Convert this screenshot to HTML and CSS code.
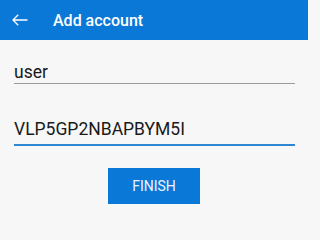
FILE: index.html
```html
<!DOCTYPE html>
<html>
<head>
<meta charset="utf-8">
<link rel="stylesheet" href="styles.css">
</head>
<body>
<header class="appbar">
  <svg class="back" width="16" height="12" viewBox="0 0 16 12" aria-hidden="true">
    <path d="M15.5 6H1M6.2 0.8L1 6l5.2 5.2" fill="none" stroke="#ffffff" stroke-width="1.3"/>
  </svg>
  <span class="title">Add account</span>
</header>
<main class="content">
  <div class="field">user</div>
  <div class="field active">VLP5GP2NBAPBYM5I</div>
  <div class="actions"><button class="btn">FINISH</button></div>
</main>
</body>
</html>
```
FILE: styles.css
```css
html {
  background: #f7f7f7;
}
html, body {
  margin: 0;
  padding: 0;
}
body {
  width: 308px;
  min-height: 220px;
  font-family: Roboto, "Noto Sans", sans-serif;
}
.appbar {
  height: 40px;
  background: #0a78d6;
  display: flex;
  align-items: center;
  padding-left: 12px;
  box-sizing: border-box;
}
.back {
  display: block;
}
.title {
  color: #ffffff;
  font-size: 16px;
  font-weight: 500;
  margin-left: 25px;
}
.content {
  padding: 22px 13px 0 14px;
}
.field {
  font-size: 17.5px;
  line-height: 21px;
  color: #1a1a1a;
  border-bottom: 1px solid #9a9a9a;
}
.field.active {
  margin-top: 35px;
  padding-bottom: 4px;
  border-bottom: 2px solid #2f86d2;
}
.actions {
  display: flex;
  justify-content: center;
  margin-top: 22px;
  padding-right: 1px;
}
.btn {
  width: 92px;
  height: 36px;
  border: none;
  border-radius: 0;
  background: #0a78d6;
  color: #eaf4ff;
  font-family: Roboto, sans-serif;
  font-size: 14px;
  padding: 0;
}
```
